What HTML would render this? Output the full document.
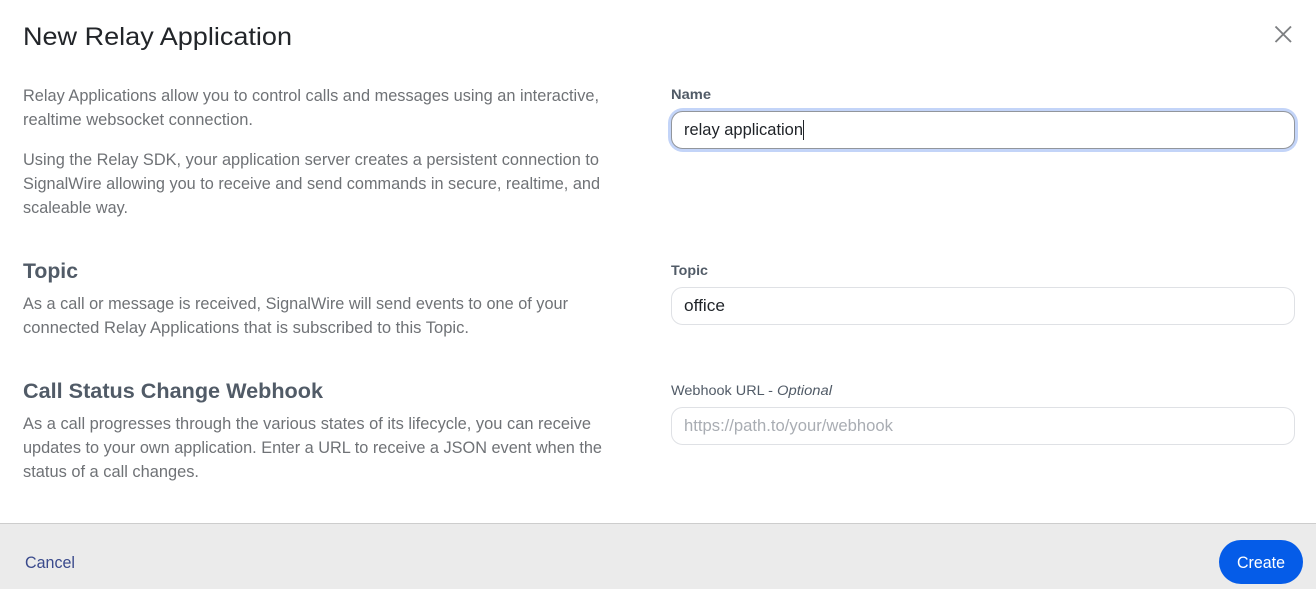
<!DOCTYPE html>
<html lang="en">
<head>
<meta charset="utf-8">
<title>New Relay Application</title>
<style>
html,body{margin:0;padding:0;width:1316px;height:589px;overflow:hidden;background:#fff}
svg{display:block}
text{font-family:"Liberation Sans",sans-serif;font-size:16.5px}
.p{fill:#6f7276}
.h{font-weight:700;font-size:21.5px;fill:#515b67}
.l{font-weight:700;font-size:13.5px;fill:#515b67}
.v{fill:#1f2328}
</style>
</head>
<body>
<svg width="1316" height="589" viewBox="0 0 1316 589" xmlns="http://www.w3.org/2000/svg">
<rect width="1316" height="589" fill="#fff"/>

<text x="23" y="45" style="font-size:25px" fill="#222529" textLength="269" lengthAdjust="spacingAndGlyphs">New Relay Application</text>
<path d="M1275.500 26.500L1291 42M1291 26.500L1275.500 42" stroke="#7d7f82" stroke-width="1.900" fill="none"/>

<text class="p" x="23" y="101" textLength="576" lengthAdjust="spacingAndGlyphs">Relay Applications allow you to control calls and messages using an interactive,</text>
<text class="p" x="23" y="125" textLength="230" lengthAdjust="spacingAndGlyphs">realtime websocket connection.</text>
<text class="p" x="23" y="165" textLength="576" lengthAdjust="spacingAndGlyphs">Using the Relay SDK, your application server creates a persistent connection to</text>
<text class="p" x="23" y="189" textLength="577" lengthAdjust="spacingAndGlyphs">SignalWire allowing you to receive and send commands in secure, realtime, and</text>
<text class="p" x="23" y="213" textLength="105" lengthAdjust="spacingAndGlyphs">scaleable way.</text>

<text class="h" x="23" y="278" textLength="55" lengthAdjust="spacingAndGlyphs">Topic</text>
<text class="p" x="23" y="309" textLength="545" lengthAdjust="spacingAndGlyphs">As a call or message is received, SignalWire will send events to one of your</text>
<text class="p" x="23" y="333" textLength="446" lengthAdjust="spacingAndGlyphs">connected Relay Applications that is subscribed to this Topic.</text>

<text class="h" x="23" y="398" textLength="300" lengthAdjust="spacingAndGlyphs">Call Status Change Webhook</text>
<text class="p" x="23" y="429" textLength="568" lengthAdjust="spacingAndGlyphs">As a call progresses through the various states of its lifecycle, you can receive</text>
<text class="p" x="23" y="453" textLength="579" lengthAdjust="spacingAndGlyphs">updates to your own application. Enter a URL to receive a JSON event when the</text>
<text class="p" x="23" y="477" textLength="176" lengthAdjust="spacingAndGlyphs">status of a call changes.</text>

<text class="l" x="671" y="99" textLength="40" lengthAdjust="spacingAndGlyphs">Name</text>
<rect x="668" y="108" width="630" height="44" rx="15" fill="#c3d4f8"/>
<rect x="671.500" y="111.500" width="623" height="37" rx="11" fill="#fff" stroke="#92969c"/>
<text class="v" x="684" y="135" textLength="119" lengthAdjust="spacingAndGlyphs">relay application</text>
<rect x="803" y="120" width="1" height="20" fill="#1f2328"/>

<text class="l" x="671" y="275" textLength="37" lengthAdjust="spacingAndGlyphs">Topic</text>
<rect x="671.500" y="287.500" width="623" height="37" rx="11" fill="#fff" stroke="#dfe1e5"/>
<text class="v" x="684" y="311" textLength="41" lengthAdjust="spacingAndGlyphs">office</text>

<text x="671" y="395" style="font-size:13.5px" fill="#515b67" textLength="106" lengthAdjust="spacingAndGlyphs" xml:space="preserve">Webhook URL - </text>
<text x="777" y="395" style="font-size:13.5px;font-style:italic" fill="#515b67" textLength="55" lengthAdjust="spacingAndGlyphs">Optional</text>
<rect x="671.500" y="407.500" width="623" height="37" rx="11" fill="#fff" stroke="#dfe1e5"/>
<text x="684" y="431" fill="#a9adb3" textLength="209" lengthAdjust="spacingAndGlyphs">https://path.to/your/webhook</text>

<rect x="0" y="523" width="1316" height="66" fill="#ebebeb"/>
<rect x="0" y="523" width="1316" height="1" fill="#cdcdcd"/>
<text x="25" y="568" fill="#3a4a8c" textLength="50" lengthAdjust="spacingAndGlyphs">Cancel</text>
<rect x="1219" y="540" width="84" height="44" rx="22" fill="#055ce8"/>
<text x="1237" y="568" fill="#fff" textLength="48" lengthAdjust="spacingAndGlyphs">Create</text>
</svg>
</body>
</html>
